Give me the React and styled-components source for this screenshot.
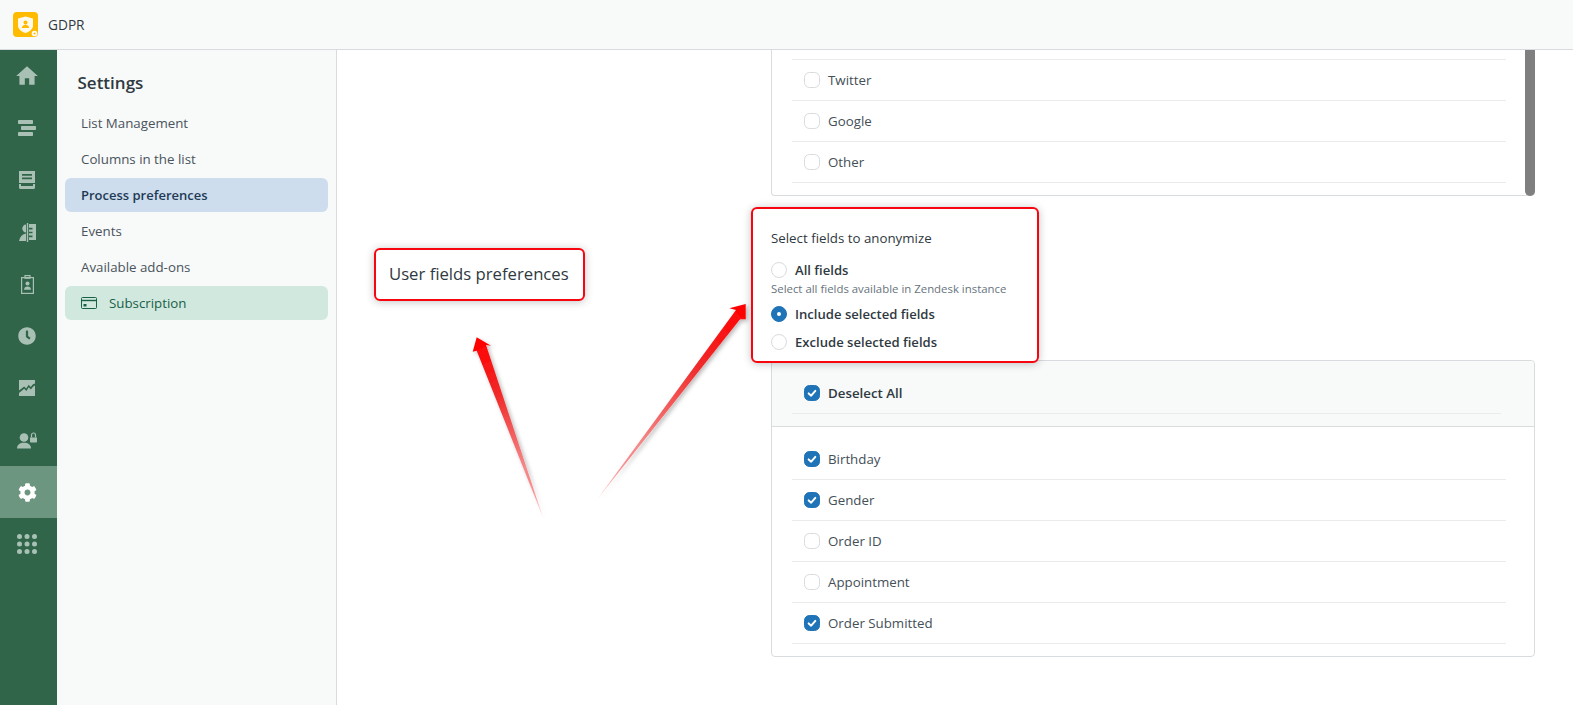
import React from "react";
import styled, { createGlobalStyle } from "styled-components";
import { MdHome } from "react-icons/md";
import { FaClock, FaCog } from "react-icons/fa";

const Global = createGlobalStyle`
  html, body { margin: 0; padding: 0; height: 100%; background: #fff; }
  body { font-family: "Open Sans", "Noto Sans", sans-serif; font-size: 13.3px; color: #2f3941; overflow: hidden; }
  * { box-sizing: border-box; }
`;

const Page = styled.div`
  position: relative;
  width: 100%;
  height: 705px;
  display: flex;
  flex-direction: column;
  overflow: hidden;
`;
const TopBar = styled.header`
  height: 50px;
  flex: none;
  display: flex;
  align-items: center;
  gap: 10px;
  padding-left: 13px;
  background: #f8f9f9;
  border-bottom: 1px solid #d8dcde;
`;
const AppName = styled.span`
  font-size: 13.7px;
  font-weight: 500;
  color: #2f3941;
`;
const Body = styled.div`
  flex: 1;
  display: flex;
  min-height: 0;
`;
const Rail = styled.nav`
  width: 57px;
  flex: none;
  background: #30654a;
  display: flex;
  flex-direction: column;
`;
const RailItem = styled.div`
  height: 52px;
  padding-right: 3px;
  display: flex;
  align-items: center;
  justify-content: center;
  color: ${(p) => (p.$active ? "#fff" : "#a9c1b5")};
  background: ${(p) => (p.$active ? "#6c967f" : "transparent")};
`;
const Sidebar = styled.aside`
  width: 280px;
  flex: none;
  background: #f8f9f9;
  border-right: 1px solid #d8dcde;
  padding: 0 8px;
`;
const SideTitle = styled.h2`
  margin: 0;
  height: 56px;
  padding: 21px 0 0 12.5px;
  font-size: 17px;
  line-height: 24px;
  font-weight: 600;
  color: #2f3941;
`;
const SideList = styled.div`
  display: flex;
  flex-direction: column;
  gap: 2px;
`;
const SideItem = styled.div`
  height: 34px;
  border-radius: 6px;
  padding-left: 16px;
  display: flex;
  align-items: center;
  gap: 12px;
  font-size: ${(p) => (p.$active ? "13px" : "inherit")};
  color: ${(p) => (p.$active ? "#1f3a56" : p.$green ? "#186146" : "#49545c")};
  font-weight: ${(p) => (p.$active ? 600 : 400)};
  background: ${(p) => (p.$active ? "#cddded" : p.$green ? "#d1e8df" : "transparent")};
`;
const Main = styled.main`
  flex: 1;
  min-width: 0;
  display: grid;
  grid-template-columns: 397px 764px;
  grid-template-rows: auto auto 1fr;
  padding-left: 37px;
  background: #fff;
`;
const TopCard = styled.section`
  grid-column: 2;
  position: relative;
  border: 1px solid #d8dcde;
  border-top: 0;
  border-radius: 0 0 4px 4px;
  padding: 0 28px 12px 20px;
`;
const Scrollbar = styled.div`
  position: absolute;
  top: 0;
  right: -1px;
  bottom: -1px;
  width: 10px;
  background: #7f7f7f;
  border-radius: 0 0 5px 5px;
`;
const Row = styled.div`
  height: ${(p) => (p.$clipped ? "10px" : "41px")};
  display: flex;
  align-items: center;
  gap: 8px;
  padding-left: 12px;
  padding-bottom: 1px;
  border-bottom: 1px solid #e9ebed;
  font-weight: ${(p) => (p.$bold ? 600 : 400)};
  color: ${(p) => (p.$bold ? "#2f3941" : "#444f57")};
`;
const Box = styled.span`
  width: 16px;
  height: 16px;
  flex: none;
  border-radius: 5.5px;
  display: flex;
  align-items: center;
  justify-content: center;
  background: ${(p) => (p.$on ? "#1f73b7" : "#fff")};
  border: 1px solid ${(p) => (p.$on ? "#1f73b7" : "#d8dcde")};
`;
const LabelNote = styled.div`
  grid-column: 1;
  grid-row: 2;
  align-self: start;
  margin-top: 52px;
  width: 211px;
  height: 53px;
  padding: 0 0 3px 13px;
  display: flex;
  align-items: center;
  font-size: 16.7px;
  color: #2f3941;
  border: 2px solid #f8060f;
  border-radius: 6px;
  box-shadow: 0 1px 9px rgba(0, 0, 0, 0.24);
  background: #fff;
`;
const FieldNote = styled.div`
  grid-column: 2;
  grid-row: 2;
  position: relative;
  z-index: 2;
  width: 288px;
  height: 156px;
  margin: 11px 0 -3px -20px;
  padding: 19px 0 0 18px;
  border: 2px solid #f8060f;
  border-radius: 6px;
  box-shadow: 0 1px 9px rgba(0, 0, 0, 0.24);
  background: #fff;
`;
const FieldTitle = styled.div`
  height: 20px;
  line-height: 20px;
  color: #2f3941;
  margin-bottom: 12px;
`;
const RadioRow = styled.div`
  height: 20px;
  display: flex;
  align-items: center;
  gap: 8px;
  font-size: 13.1px;
  font-weight: 600;
  color: #2f3941;
  margin-top: ${(p) => p.$top || 0}px;
`;
const Radio = styled.span`
  width: 16px;
  height: 16px;
  flex: none;
  border-radius: 50%;
  border: 1px solid ${(p) => (p.$on ? "#1f73b7" : "#d8dcde")};
  background: ${(p) => (p.$on ? "#1f73b7" : "#fff")};
  display: flex;
  align-items: center;
  justify-content: center;
  &::after {
    content: "";
    width: 4px;
    height: 4px;
    border-radius: 50%;
    background: ${(p) => (p.$on ? "#fff" : "transparent")};
  }
`;
const Hint = styled.div`
  height: 16px;
  line-height: 16px;
  margin-top: 1px;
  font-size: 11.4px;
  color: #68737d;
`;
const BottomCard = styled.section`
  grid-column: 2;
  grid-row: 3;
  align-self: start;
  border: 1px solid #d8dcde;
  border-radius: 4px;
`;
const CardHead = styled.div`
  background: #f8f9f9;
  border-bottom: 1px solid #d8dcde;
  border-radius: 4px 4px 0 0;
  padding: 12px 33px 12px 20px;
`;
const CardRows = styled.div`
  padding: 12px 28px 12px 20px;
`;
const ArrowLayer = styled.svg`
  position: absolute;
  left: 0;
  top: 0;
  width: 1573px;
  height: 705px;
  pointer-events: none;
  z-index: 3;
`;

const Check = () => (
  <svg width="10" height="10" viewBox="0 0 12 12" fill="none">
    <path d="M2 6.5 5 9.2l5-5.700" stroke="#fff" strokeWidth="2.4" strokeLinecap="round" strokeLinejoin="round" />
  </svg>
);
const CheckRow = ({ on, bold, children }) => (
  <Row $bold={bold}>
    <Box $on={on}>{on && <Check />}</Box>
    {children}
  </Row>
);

const Logo = () => (
  <svg width="25" height="25" viewBox="0 0 25 25">
    <rect width="25" height="25" rx="4" fill="#ffbb00" />
    <path d="M12.5 4.5 20 6.5v7c0 3.6-3.2 6.2-7.5 7.6C8.200 19.700 5 17.100 5 13.500v-7z" fill="#fff" fillOpacity="0.92" />
    <circle cx="12.5" cy="10.5" r="2" fill="#ffbb00" />
    <path d="M8.800 16c.3-2.200 1.800-3.200 3.700-3.200s3.400 1 3.700 3.200z" fill="#ffbb00" />
    <circle cx="21.5" cy="21.5" r="2.8" fill="#fff" />
    <circle cx="21.5" cy="21.5" r="1.1" fill="#ffbb00" />
  </svg>
);

const BarsIcon = () => (
  <svg width="18" height="16" viewBox="0 0 18 16" fill="currentColor">
    <rect x="0" y="0" width="15" height="4" rx="0.8" />
    <rect x="3" y="6" width="15" height="4" rx="0.8" />
    <rect x="0" y="12" width="15" height="4" rx="0.8" />
  </svg>
);
const InboxIcon = () => (
  <svg width="16" height="18" viewBox="0 0 16 18" fill="currentColor">
    <path d="M0 0h16v12H0zM3 3v1.800h10V3zm0 3.500v1.800h10V6.500z" fillRule="evenodd" />
    <path d="M0 13h2v2h12v-2h2v3.500a1.500 1.500 0 0 1-1.500 1.500h-13A1.500 1.500 0 0 1 0 16.500z" />
  </svg>
);
const ContactIcon = () => (
  <svg width="17" height="19" viewBox="0 0 17 19" fill="currentColor">
    <path d="M7 1.500C5 1.500 3.300 3.200 3.300 5.500S5 9.500 7 9.500z" />
    <path d="M7 10.500c-3.500.5-6 3-7 7.500h7z" />
    <rect x="7.8" y="0" width="1.4" height="19" />
    <path d="M10 1h7v16h-7v-2.800h3.500v-1.600H10v-2.300h3.500V8.700H10V6.400h3.500V4.800H10z" />
  </svg>
);
const ClipboardIcon = () => (
  <svg width="13" height="19" viewBox="0 0 13 19" fill="none" stroke="currentColor">
    <rect x="0.6" y="2.6" width="11.8" height="15.8" strokeWidth="1.2" />
    <rect x="4" y="0.6" width="5" height="2.6" strokeWidth="1.2" />
    <circle cx="6.5" cy="8.5" r="2" fill="currentColor" stroke="none" />
    <path d="M3 14.800c0-2.300 1.500-3.400 3.500-3.400s3.500 1.100 3.500 3.400z" fill="currentColor" stroke="none" />
  </svg>
);
const ChartIcon = () => (
  <svg width="16" height="16" viewBox="0 0 16 16">
    <path d="M0 0h16v3.500l-2 .8-2.300 2.800-2-2.300-2.500 3.700-2-2L0 10.500z" fill="currentColor" />
    <path d="M0 13 5.200 8.800l2.200 2.200 2.400-3.700 2 2.200 2.500-3.100L16 5.500V16H0z" fill="currentColor" />
  </svg>
);
const UserLockIcon = () => (
  <svg width="20" height="17" viewBox="0 0 20 17" fill="currentColor">
    <circle cx="7" cy="5.5" r="4.3" />
    <path d="M0 16.500c0-3.800 3-5.800 7-5.800s7 2 7 5.800z" />
    <path d="M13 5.500h7v4.300a.8.8 0 0 1-.8.800h-5.400a.8.8 0 0 1-.8-.800z" />
    <path d="M14.500 5.500V3a2 2 0 0 1 4 0v2.500" fill="none" stroke="currentColor" strokeWidth="1.2" />
  </svg>
);
const DotsIcon = () => (
  <svg width="20" height="20" viewBox="0 0 20 20" fill="currentColor">
    {[2.5, 10, 17.5].flatMap((y) =>
      [2.5, 10, 17.5].map((x) => <circle key={`${x}-${y}`} cx={x} cy={y} r="2.5" />)
    )}
  </svg>
);
const CardIcon = () => (
  <svg width="16" height="12" viewBox="0 0 16 12" fill="none" stroke="#186146">
    <rect x="0.5" y="0.5" width="15" height="11" rx="1" />
    <path d="M0.5 3.500h15" strokeWidth="1.4" />
    <rect x="2.5" y="7" width="3" height="2.5" fill="#186146" stroke="none" />
  </svg>
);

const railIcons = [
  <MdHome size={26} key="a" />,
  <BarsIcon key="b" />,
  <InboxIcon key="c" />,
  <ContactIcon key="d" />,
  <ClipboardIcon key="e" />,
  <FaClock size={18} key="f" />,
  <ChartIcon key="g" />,
  <UserLockIcon key="h" />,
  <FaCog size={19} key="i" />,
  <DotsIcon key="j" />,
];

export default function App() {
  return (
    <Page>
      <Global />
      <TopBar>
        <Logo />
        <AppName>GDPR</AppName>
      </TopBar>
      <Body>
        <Rail>
          {railIcons.map((icon, i) => (
            <RailItem key={i} $active={i === 8}>
              {icon}
            </RailItem>
          ))}
        </Rail>
        <Sidebar>
          <SideTitle>Settings</SideTitle>
          <SideList>
            <SideItem>List Management</SideItem>
            <SideItem>Columns in the list</SideItem>
            <SideItem $active>Process preferences</SideItem>
            <SideItem>Events</SideItem>
            <SideItem>Available add-ons</SideItem>
            <SideItem $green>
              <CardIcon />
              Subscription
            </SideItem>
          </SideList>
        </Sidebar>
        <Main>
          <TopCard>
            <Row $clipped />
            <CheckRow>Twitter</CheckRow>
            <CheckRow>Google</CheckRow>
            <CheckRow>Other</CheckRow>
            <Scrollbar />
          </TopCard>
          <LabelNote>User fields preferences</LabelNote>
          <FieldNote>
            <FieldTitle>Select fields to anonymize</FieldTitle>
            <RadioRow>
              <Radio />
              All fields
            </RadioRow>
            <Hint>Select all fields available in Zendesk instance</Hint>
            <RadioRow $top={7}>
              <Radio $on />
              Include selected fields
            </RadioRow>
            <RadioRow $top={8}>
              <Radio />
              Exclude selected fields
            </RadioRow>
          </FieldNote>
          <BottomCard>
            <CardHead>
              <CheckRow on bold>
                Deselect All
              </CheckRow>
            </CardHead>
            <CardRows>
              <CheckRow on>Birthday</CheckRow>
              <CheckRow on>Gender</CheckRow>
              <CheckRow>Order ID</CheckRow>
              <CheckRow>Appointment</CheckRow>
              <CheckRow on>Order Submitted</CheckRow>
            </CardRows>
          </BottomCard>
        </Main>
      </Body>
      <ArrowLayer viewBox="0 0 1573 705">
        <defs>
          <linearGradient id="a1" gradientUnits="userSpaceOnUse" x1="478" y1="340" x2="545" y2="524">
            <stop offset="0" stopColor="#ff0000" />
            <stop offset="0.3" stopColor="#f02a2a" />
            <stop offset="0.7" stopColor="#f58a8a" />
            <stop offset="1" stopColor="#ff0000" stopOpacity="0" />
          </linearGradient>
          <linearGradient id="a2" gradientUnits="userSpaceOnUse" x1="745" y1="305" x2="592" y2="506">
            <stop offset="0" stopColor="#ff0000" />
            <stop offset="0.3" stopColor="#f02a2a" />
            <stop offset="0.7" stopColor="#f58a8a" />
            <stop offset="1" stopColor="#ff0000" stopOpacity="0" />
          </linearGradient>
          <filter id="sh" x="-30%" y="-10%" width="160%" height="120%">
            <feDropShadow dx="2" dy="2" stdDeviation="2" floodColor="#000" floodOpacity="0.28" />
          </filter>
        </defs>
        <polygon filter="url(#sh)" fill="url(#a1)" points="476.7,337.3 491,345.7 486,345 543.3,518.3 476.7,350.7 472.7,351.7" />
        <polygon filter="url(#sh)" fill="url(#a2)" points="745.7,304 729.3,308.3 736,310 596.7,500 740,319.3 745.7,319.3" />
      </ArrowLayer>
    </Page>
  );
}
